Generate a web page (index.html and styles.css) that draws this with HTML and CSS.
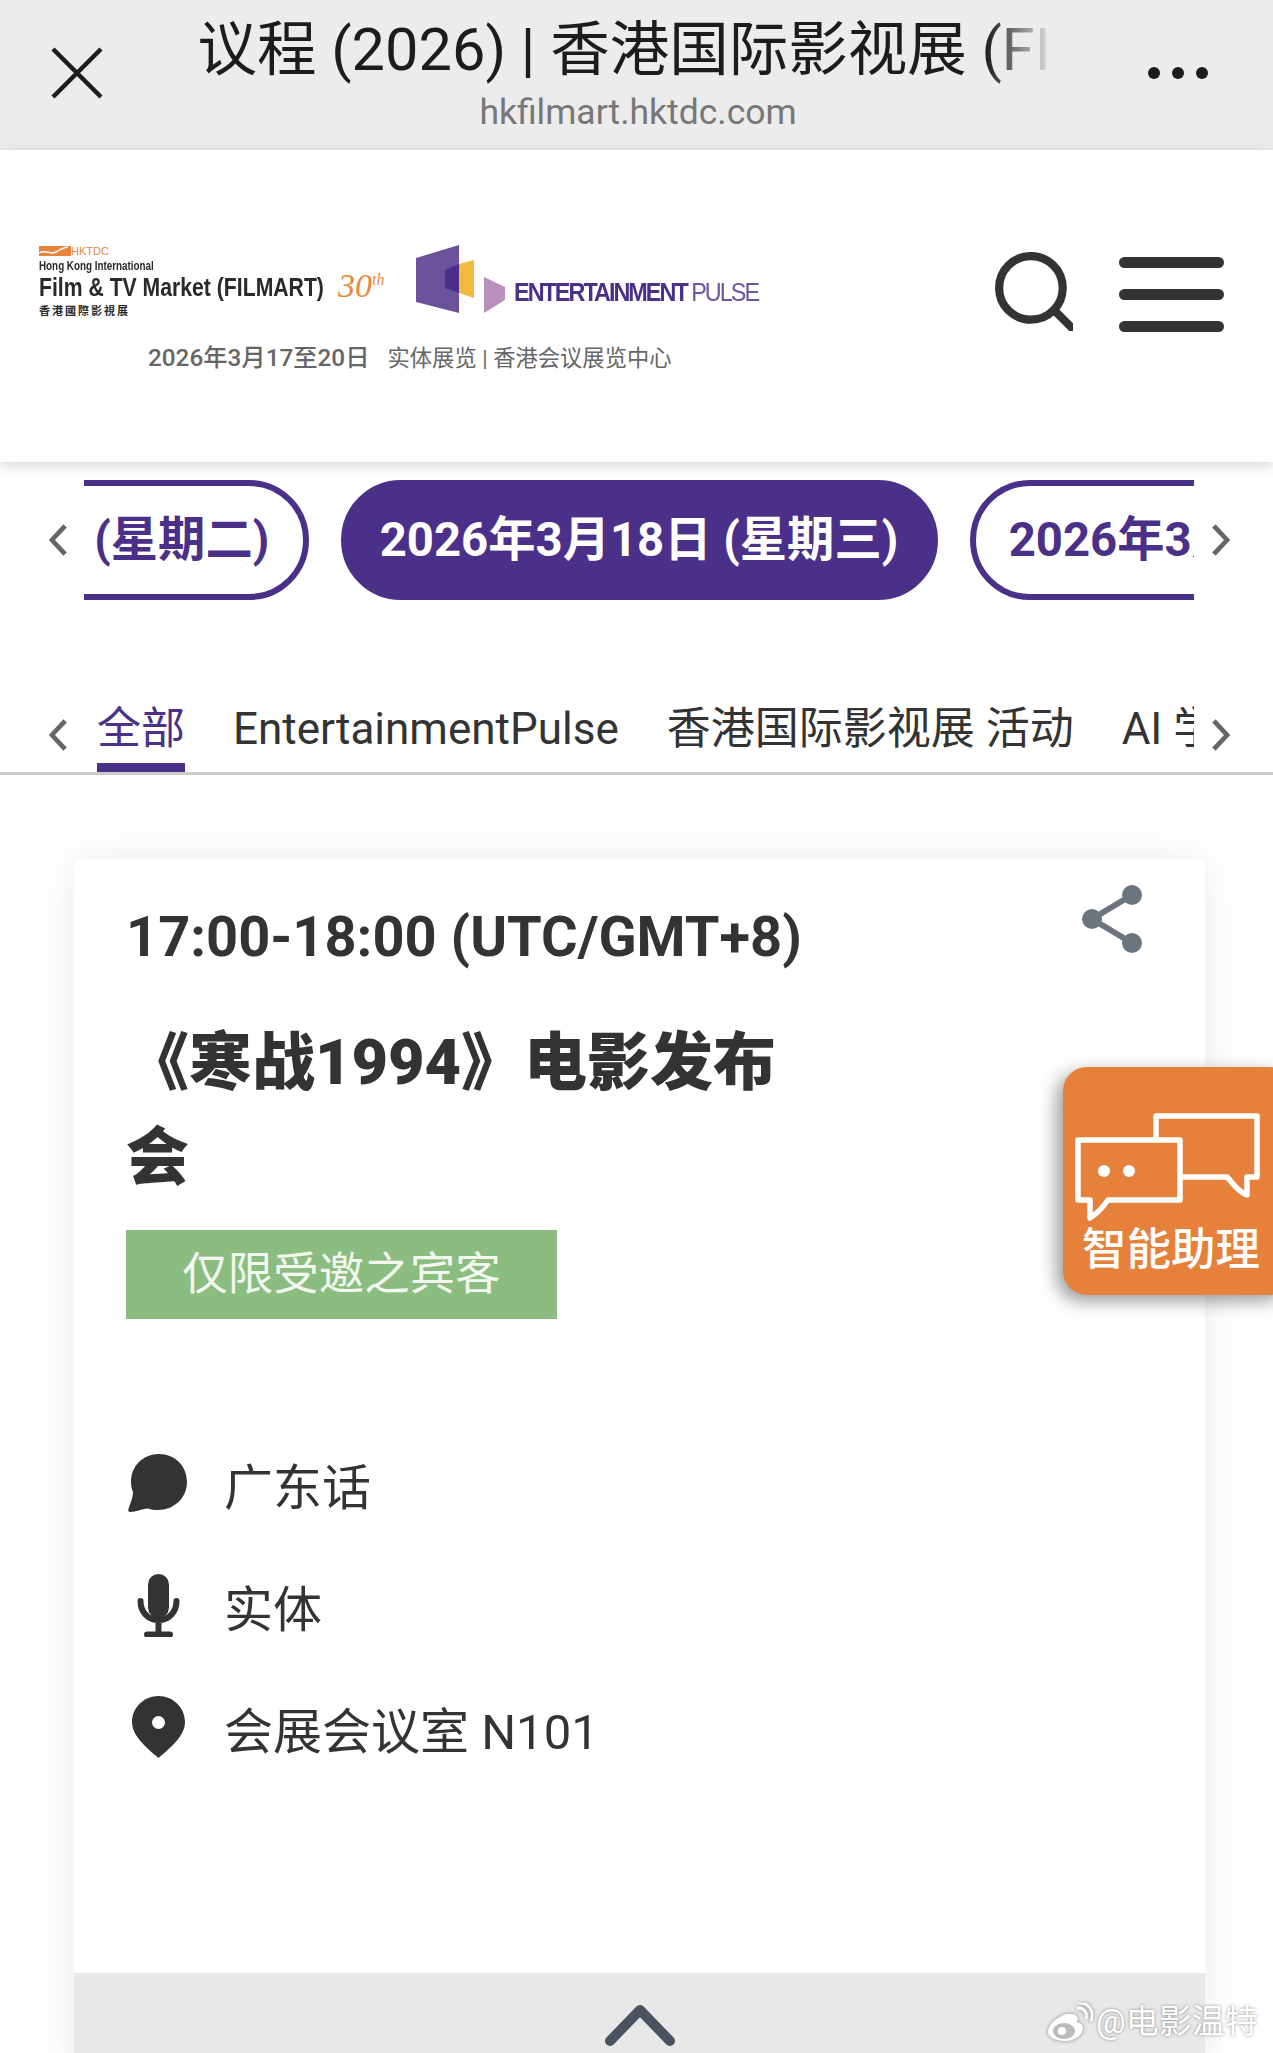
FILE: index.html
```html
<!DOCTYPE html>
<html lang="zh-CN">
<head>
    <meta charset="UTF-8">
    <meta name="viewport" content="width=device-width, initial-scale=1.0">
    <title>议程 (2026) | 香港国际影视展 (FILMART)</title>
    <link rel="stylesheet" href="styles.css">
</head>
<body>
    <div class="page">
        <!-- in-app browser bar -->
        <div class="topbar">
            <svg class="close-icon" viewBox="0 0 52 52"><path d="M2 2 50 50M50 2 2 50"/></svg>
            <div class="topbar-center">
                <div class="page-title">议程 (2026) | 香港国际影视展 (FILMART)</div>
                <div class="page-url">hkfilmart.hktdc.com</div>
            </div>
            <div class="more-dots"><span></span><span></span><span></span></div>
        </div>

        <header class="site-head">
            <div class="logo">
                <div class="logo-row">
                    <div class="brand">
                        <div class="brand-tdc">
                            <svg class="tdc-mark" viewBox="0 0 32 10"><path d="M0 0H32V10H0Z" fill="#e8853d"/><path d="M0 7C7 3 11 9 17 6S25 1 29 1" fill="none" stroke="#fff" stroke-width="1.4"/></svg>
                            <span>HKTDC</span>
                        </div>
                        <div class="brand-small">Hong Kong International</div>
                        <div class="brand-main">Film &amp; TV Market (FILMART)</div>
                        <div class="brand-cn">香港國際影視展</div>
                    </div>
                    <div class="brand-years">30<sup>th</sup></div>
                    <svg class="pulse-mark" viewBox="0 0 90 68">
                        <path d="M0 13 43 0V68L0 57Z" fill="#6c519b"/>
                        <path d="M43 19 58 15V53L43 48Z" fill="#f2b93f"/>
                        <path d="M29 25 43 19V48L29 43Z" fill="#4b2e8a"/>
                        <path d="M68 32 89 42V55L68 68Z" fill="#bb8fbd"/>
                    </svg>
                    <div class="pulse-name"><b>ENTERTAINMENT</b><span>PULSE</span></div>
                </div>
                <div class="logo-date"><span>2026年3月17至20日</span><span>实体展览 | 香港会议展览中心</span></div>
            </div>
            <div class="head-actions">
                <svg class="search-icon" viewBox="0 0 76 78"><circle cx="35" cy="36" r="31"/><path d="M60 60 75 75"/></svg>
                <div class="burger"><span></span><span></span><span></span></div>
            </div>
        </header>

        <!-- date picker -->
        <nav class="date-nav">
            <svg class="chevron" viewBox="0 0 20 36"><path d="M17 3 3 18 17 33"/></svg>
            <div class="date-track">
                <a class="date-pill">2026年3月17日 (星期二)</a>
                <a class="date-pill active">2026年3月18日 (星期三)</a>
                <a class="date-pill">2026年3月19日 (星期四)</a>
            </div>
            <svg class="chevron" viewBox="0 0 20 36"><path d="M3 3 17 18 3 33"/></svg>
        </nav>

        <!-- category tabs -->
        <nav class="tab-nav">
            <svg class="chevron" viewBox="0 0 20 36"><path d="M17 3 3 18 17 33"/></svg>
            <div class="tab-track">
                <a class="tab active">全部</a>
                <a class="tab">EntertainmentPulse</a>
                <a class="tab">香港国际影视展 活动</a>
                <a class="tab">AI 学院</a>
            </div>
            <svg class="chevron" viewBox="0 0 20 36"><path d="M3 3 17 18 3 33"/></svg>
        </nav>

        <section class="card">
            <svg class="share-icon" viewBox="0 0 60 68"><path d="M50 10 10 34 50 58"/><circle cx="50" cy="10" r="10"/><circle cx="10" cy="34" r="10"/><circle cx="50" cy="58" r="10"/></svg>
            <div class="card-time">17:00-18:00 (UTC/GMT+8)</div>
            <h1 class="card-title">《寒战1994》电影发布会</h1>
            <div class="badge">仅限受邀之宾客</div>
            <ul class="info-list">
                <li>
                    <span class="info-icon"><svg width="60" height="58" viewBox="0 0 60 58"><path d="M31 0C47 0 59 12 59 28 59 44 46 56 30 56 26 56 23 55.500 20 54.500 14 55 7 58 3 58 0 58 0 56 .5 55 2 50 5 44 5 38 3.500 35 3 31 3 28 3 12 15 0 31 0Z"/></svg></span>
                    广东话
                </li>
                <li>
                    <span class="info-icon"><svg width="43" height="63" viewBox="0 0 43 63"><rect x="11" y="0" width="21" height="44" rx="10.500"/><path class="mic-line" d="M3.500 27C3.500 38 11 46 21.500 46S39.500 38 39.500 27M21.500 46V60M10 60.500H33"/></svg></span>
                    实体
                </li>
                <li>
                    <span class="info-icon"><svg width="53" height="62" viewBox="0 0 53 62"><path d="M26.500 0C41 0 53 11.500 53 26 53 40 38 52 26.500 62 15 52 0 40 0 26 0 11.500 12 0 26.500 0Z"/><circle cx="26.500" cy="26.500" r="6.500" fill="#fff"/></svg></span>
                    会展会议室 N101
                </li>
            </ul>
            <div class="card-foot">
                <svg class="foot-chevron" viewBox="0 0 70 42"><path d="M5 36 35 5 65 36"/></svg>
            </div>
        </section>

        <!-- floating assistant button -->
        <div class="assistant">
            <svg class="assistant-icon" viewBox="0 0 190 110">
                <path d="M81 27V3H182V64H172V82C162 78 158 70 152 64H105"/>
                <path d="M3 27H105V87H33C28 94 20 102 15 105V87H3Z"/>
                <circle cx="29" cy="58" r="6" class="dot"/>
                <circle cx="54" cy="58" r="6" class="dot"/>
            </svg>
            <div class="assistant-label">智能助理</div>
        </div>

        <div class="watermark">
            <svg class="weibo-mark" viewBox="0 0 46 38">
                <path d="M19 11C8 15 1 23 1 29 1 34 9 38 18 38 29 38 36 31 36 25 36 21 32 20 30 19 32 14 29 11 25 11 23 11 21 11 19 11Z" fill="#fff"/>
                <ellipse cx="17" cy="28" rx="11" ry="8" fill="#bbb"/>
                <circle cx="15" cy="28" r="4" fill="#fff"/>
                <path d="M30 5C37 4 41 10 39 16M31 0C41-1 48 8 44 18" fill="none" stroke="#fff" stroke-width="2.500"/>
            </svg>
            <span>@电影温特</span>
        </div>
    </div>
</body>
</html>
```

FILE: styles.css
```css
html, body {
    margin: 0;
    padding: 0;
    background: #fff;
}
body {
    font-family: Roboto, "Noto Sans CJK SC", sans-serif;
    color: #333;
}
.page {
    position: relative;
    width: 1273px;
    height: 2053px;
    overflow: hidden;
}

/* top bar */
.topbar {
    height: 150px;
    background: #ececec;
    display: flex;
    align-items: center;
    padding: 0 65px 0 51px;
    box-sizing: border-box;
}
.close-icon {
    width: 52px;
    height: 52px;
    margin-top: -4px;
    flex-shrink: 0;
}
.close-icon path {
    fill: none;
    stroke: #1c1c1c;
    stroke-width: 4.5px;
}
.topbar-center {
    flex: 1;
    min-width: 0;
    align-self: flex-start;
    padding-top: 17px;
    display: flex;
    flex-direction: column;
    align-items: center;
}
.page-title {
    width: 856px;
    height: 68px;
    line-height: 66px;
    font-size: 59.5px;
    color: #1c1c1c;
    white-space: nowrap;
    overflow: hidden;
    -webkit-mask-image: linear-gradient(to right, #000 92%, transparent 100%);
    mask-image: linear-gradient(to right, #000 92%, transparent 100%);
}
.page-url {
    margin-top: 7px;
    padding-left: 25px;
    line-height: 40px;
    font-size: 35.5px;
    color: #777;
}
.more-dots {
    display: flex;
    gap: 12px;
    margin-top: -4px;
}
.more-dots span {
    width: 12px;
    height: 12px;
    border-radius: 50%;
    background: #1c1c1c;
}

/* site header */
.site-head {
    position: relative;
    height: 312px;
    display: flex;
    justify-content: space-between;
    align-items: flex-start;
    padding: 95px 49px 0 39px;
    box-sizing: border-box;
    background: #fff;
    box-shadow: 0 4px 12px rgba(0, 0, 0, .16);
}
.logo-row {
    display: flex;
    align-items: flex-start;
    height: 72px;
}
.brand {
    width: 290px;
    font-family: "Liberation Sans", sans-serif;
    font-weight: bold;
    color: #2a2a2a;
}
.brand-tdc {
    display: flex;
    align-items: center;
    height: 11px;
    font-size: 11px;
    font-weight: normal;
    color: #e8853d;
}
.tdc-mark {
    width: 32px;
    height: 10px;
}
.brand-small {
    margin-top: 4px;
    height: 13px;
    line-height: 13px;
    font-size: 12px;
    white-space: nowrap;
    transform: scaleX(.82);
    transform-origin: left;
}
.brand-main {
    margin-top: 0;
    height: 28px;
    line-height: 28px;
    font-size: 26px;
    white-space: nowrap;
    transform: scaleX(.815);
    transform-origin: left;
}
.brand-cn {
    margin-top: 2px;
    font-family: "Noto Sans CJK TC", sans-serif;
    line-height: 14px;
    font-size: 11px;
    letter-spacing: 2px;
}
.brand-years {
    margin: 26px 0 0 9px;
    width: 78px;
    font-family: "Liberation Serif", serif;
    font-style: italic;
    line-height: 30px;
    font-size: 34px;
    color: #e88a3e;
}
.brand-years sup {
    font-size: 16px;
    line-height: 0;
}
.pulse-mark {
    width: 90px;
    height: 68px;
    flex-shrink: 0;
}
.pulse-name {
    margin: 34px 0 0 8px;
    width: 250px;
    line-height: 26px;
    font-family: "Liberation Sans", sans-serif;
    font-size: 26px;
    letter-spacing: -2.2px;
    color: #4b3089;
    white-space: nowrap;
    transform: scaleX(.9);
    transform-origin: left;
}
.pulse-name b {
    margin-right: 5px;
}
.pulse-name span {
    color: #6d55a3;
}
.logo-date {
    display: flex;
    align-items: center;
    gap: 18px;
    margin: 26px 0 0 109px;
    line-height: 30px;
    font-size: 22.3px;
    color: #666;
}
.logo-date span:first-child {
    font-size: 24.3px;
    font-weight: 500;
}
.head-actions {
    display: flex;
    align-items: flex-start;
    gap: 46px;
    margin-top: 6px;
}
.search-icon {
    width: 78px;
    height: 80px;
}
.search-icon circle, .search-icon path {
    fill: none;
    stroke: #333;
    stroke-width: 8px;
    stroke-linecap: round;
}
.burger {
    display: flex;
    flex-direction: column;
    gap: 21px;
    width: 105px;
    margin-top: 6px;
}
.burger span {
    height: 11px;
    border-radius: 6px;
    background: #333;
}

/* date and tab scrollers */
.date-nav, .tab-nav {
    display: flex;
    align-items: center;
    padding: 0 43px 0 49px;
}
.chevron {
    width: 19px;
    height: 34px;
    flex-shrink: 0;
}
.chevron path {
    fill: none;
    stroke: #666;
    stroke-width: 5px;
}
.date-nav {
    margin-top: 18px;
    height: 120px;
}
.date-track, .tab-track {
    flex: 1;
    min-width: 0;
    display: flex;
    margin: 0 17px 0 16px;
    overflow: hidden;
    white-space: nowrap;
}
.date-track {
    justify-content: center;
    gap: 32px;
}
.date-pill {
    flex-shrink: 0;
    width: 597px;
    height: 120px;
    box-sizing: border-box;
    border: 6px solid #4b3089;
    border-radius: 60px;
    text-align: center;
    line-height: 108px;
    font-size: 47.3px;
    font-weight: bold;
    color: #4b3089;
}
.date-pill.active {
    background: #4b3089;
    color: #fff;
}
.tab-nav {
    margin-top: 102px;
    height: 70px;
    border-bottom: 3px solid #ccc;
    align-items: flex-start;
}
.tab-nav .chevron {
    margin-top: 16px;
}
.tab-track {
    gap: 48px;
    padding-left: 13px;
}
.tab {
    flex-shrink: 0;
    height: 70px;
    box-sizing: border-box;
    line-height: 54px;
    font-size: 44px;
    color: #333;
}
.tab.active {
    color: #4b3089;
    border-bottom: 9px solid #4b3089;
}

/* session card */
.card {
    position: relative;
    width: 1131px;
    margin: 84px 0 0 74px;
    box-shadow: 0 0 40px rgba(0, 0, 0, .08);
    background: #fff;
}
.share-icon {
    position: absolute;
    top: 26px;
    right: 63px;
    width: 60px;
    height: 68px;
}
.share-icon path {
    fill: none;
    stroke: #6c757d;
    stroke-width: 6px;
}
.share-icon circle {
    fill: #6c757d;
}
.card-time {
    padding: 43px 0 0 52px;
    line-height: 70px;
    font-size: 56px;
    font-weight: bold;
}
.card-title {
    width: 680px;
    margin: 43px 0 0 52px;
    line-height: 95px;
    font-size: 63px;
    font-weight: 900;
}
.badge {
    width: 431px;
    height: 89px;
    margin: 25px 0 0 52px;
    background: #8bbd80;
    text-align: center;
    line-height: 89px;
    font-size: 45.500px;
    color: #f2f8f0;
}
.info-list {
    list-style: none;
    margin: 103px 0 0;
    padding: 0 0 0 54px;
}
.info-list li {
    display: flex;
    align-items: center;
    gap: 36px;
    height: 122px;
    font-size: 49px;
    color: #333;
}
.info-icon {
    width: 60px;
    display: flex;
    justify-content: center;
}
.info-icon svg {
    fill: #333;
}
.mic-line {
    fill: none;
    stroke: #333;
    stroke-width: 6px;
    stroke-linecap: round;
}
.card-foot {
    margin-top: 185px;
    height: 110px;
    background: #e8e8e8;
    display: flex;
    justify-content: center;
}
.foot-chevron {
    width: 70px;
    height: 42px;
    margin-top: 32px;
}
.foot-chevron path {
    fill: none;
    stroke: #4a5160;
    stroke-width: 10px;
    stroke-linecap: round;
    stroke-linejoin: round;
}

/* floating bits */
.assistant {
    position: absolute;
    top: 1067px;
    left: 1063px;
    width: 230px;
    height: 228px;
    border-radius: 24px;
    background: #e6813c;
    box-shadow: -6px 6px 18px rgba(0, 0, 0, .4);
}
.assistant-icon {
    position: absolute;
    top: 46px;
    left: 12px;
    width: 190px;
    height: 110px;
    overflow: visible;
}
.assistant-icon path {
    fill: none;
    stroke: #fff;
    stroke-width: 5.500px;
    stroke-linejoin: round;
}
.assistant-icon .dot {
    fill: #fff;
}
.assistant-label {
    position: absolute;
    top: 153px;
    left: 19px;
    line-height: 60px;
    font-size: 44.5px;
    font-weight: 500;
    color: #fff;
    white-space: nowrap;
}
.watermark {
    position: absolute;
    top: 2002px;
    left: 1047px;
    display: flex;
    align-items: center;
    gap: 3px;
    font-size: 33px;
    line-height: 40px;
    color: #fff;
    text-shadow: 0 0 3px rgba(0, 0, 0, .45);
}
.weibo-mark {
    width: 46px;
    height: 38px;
    filter: drop-shadow(0 0 2px rgba(0, 0, 0, .4));
}
```
